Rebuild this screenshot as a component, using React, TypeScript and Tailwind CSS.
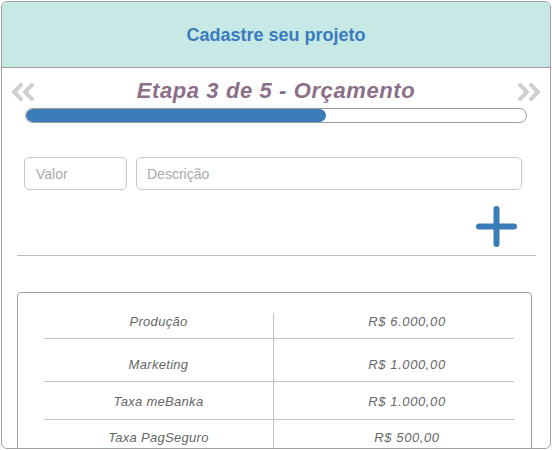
import React from "react";

const comic = { fontFamily: '"Comic Sans MS", "Liberation Sans", sans-serif' };

function Chevrons({ dir }: { dir: "left" | "right" }) {
  const flip = dir === "right";
  return (
    <svg width="25" height="18" viewBox="0 0 25 18" style={{ transform: flip ? "scaleX(-1)" : undefined }}>
      <polyline points="10,2 3,9 10,16" fill="none" stroke="#cfcfcf" strokeWidth="4" strokeLinecap="round" strokeLinejoin="round" />
      <polyline points="21,2 14,9 21,16" fill="none" stroke="#cfcfcf" strokeWidth="4" strokeLinecap="round" strokeLinejoin="round" />
    </svg>
  );
}

const rows = [
  { name: "Produção", value: "R$ 6.000,00", h: "h-[26px]", pt: "pt-0" },
  { name: "Marketing", value: "R$ 1.000,00", h: "h-[43px]", pt: "pt-[17px]" },
  { name: "Taxa meBanka", value: "R$ 1.000,00", h: "h-[38px]", pt: "pt-[11px]" },
  { name: "Taxa PagSeguro", value: "R$ 500,00", h: "h-[40px]", pt: "pt-[9px]" },
];

export default function App() {
  return (
    <div className="w-[552px] h-[450px] bg-white overflow-hidden">
      <div className="ml-[1px] mt-[1px] w-[550px] h-[448px] border border-[#a0a0a0] rounded-[6px] overflow-hidden flex flex-col">
        <div className="h-[66px] shrink-0 bg-[#c7e9e6] border-b border-[#a0a0a0] flex items-center justify-center">
          <span className="text-[18px] font-bold text-[#3b7bbd] leading-none" style={comic}>
            Cadastre seu projeto
          </span>
        </div>

        <div className="mt-[9px] h-[30px] shrink-0 flex items-center pl-[9px] pr-[9px]">
          <Chevrons dir="left" />
          <div className="flex-1 text-center">
            <span className="text-[22px] font-bold italic text-[#8b7088] tracking-[0.6px] leading-none" style={comic}>
              Etapa 3 de 5 - Orçamento
            </span>
          </div>
          <Chevrons dir="right" />
        </div>

        <div className="mt-[1px] ml-[23px] w-[502px] h-[15px] shrink-0 rounded-full border border-[#9a9a9a] overflow-hidden">
          <div className="h-full w-[60%] bg-[#3a7cb8] rounded-full" />
        </div>

        <div className="mt-[34px] ml-[22px] flex gap-[9px] shrink-0">
          <input
            placeholder="Valor"
            className="w-[103px] h-[33px] rounded-[5px] border border-[#c8c8c8] px-[11px] text-[14px] text-[#555] placeholder:text-[#aaaaaa] outline-none"
            style={{ fontFamily: '"Liberation Sans", Arial, sans-serif' }}
          />
          <input
            placeholder="Descrição"
            className="w-[386px] h-[33px] rounded-[5px] border border-[#c8c8c8] px-[10px] text-[14px] text-[#555] placeholder:text-[#aaaaaa] outline-none"
            style={{ fontFamily: '"Liberation Sans", Arial, sans-serif' }}
          />
        </div>

        <div className="mt-[16px] flex justify-end pr-[33px] shrink-0">
          <svg width="41" height="41" viewBox="0 0 41 41">
            <line x1="20.5" y1="3" x2="20.5" y2="38" stroke="#3a7cb8" strokeWidth="6" strokeLinecap="round" />
            <line x1="3" y1="20.5" x2="38" y2="20.5" stroke="#3a7cb8" strokeWidth="6" strokeLinecap="round" />
          </svg>
        </div>

        <div className="mt-[8px] ml-[15px] w-[519px] border-t border-[#bbbbbb] shrink-0" />

        <div className="mt-[36px] ml-[15px] w-[515px] flex-1 border border-[#a0a0a0] rounded-[4px] pt-[20px]">
          <div className="ml-[26px] w-[470px]">
            {rows.map((r, i) => (
              <div
                key={i}
                className={`flex ${r.h} ${i < rows.length - 1 ? "border-b border-[#c4c4c4]" : ""}`}
              >
                <div className={`w-[230px] border-r border-[#c4c4c4] text-center leading-[14px] ${r.pt}`}>
                  <span className="text-[13px] italic text-[#666] leading-[14px] tracking-[0.3px]" style={comic}>
                    {r.name}
                  </span>
                </div>
                <div className={`flex-1 text-center pl-[26px] leading-[14px] ${r.pt}`}>
                  <span className="text-[13px] italic text-[#666] leading-[14px] tracking-[0.6px]" style={comic}>
                    {r.value}
                  </span>
                </div>
              </div>
            ))}
          </div>
        </div>
      </div>
    </div>
  );
}
